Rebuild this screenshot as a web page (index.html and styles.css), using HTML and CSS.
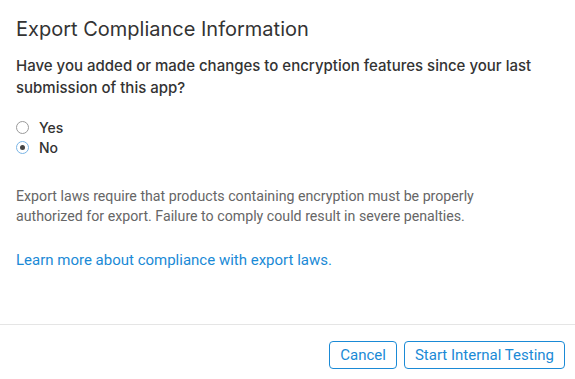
FILE: index.html
```html
<!DOCTYPE html>
<html>
<head>
<meta charset="utf-8">
<link rel="stylesheet" href="styles.css">
</head>
<body>
<div class="dialog">
  <div class="content">
    <h1 class="title">Export Compliance Information</h1>
    <p class="question">Have you added or made changes to encryption features since your last submission of this app?</p>
    <div class="options">
      <label class="option"><span class="radio"></span><span>Yes</span></label>
      <label class="option"><span class="radio checked"></span><span>No</span></label>
    </div>
    <p class="note">Export laws require that products containing encryption must be properly authorized for export. Failure to comply could result in severe penalties.</p>
    <a class="link" href="#">Learn more about compliance with export laws.</a>
  </div>
  <div class="footer">
    <button class="btn">Cancel</button>
    <button class="btn">Start Internal Testing</button>
  </div>
</div>
</body>
</html>
```
FILE: styles.css
```css
html, body {
  margin: 0;
  padding: 0;
  background: #fff;
}
body {
  font-family: Inter, "Liberation Sans", sans-serif;
  color: #333;
  width: 575px;
  height: 379px;
  overflow: hidden;
}
.dialog {
  display: flex;
  flex-direction: column;
  height: 379px;
}
.content {
  padding: 16px 16px 0 16px;
  height: 310px;
  box-sizing: border-box;
}
.title {
  font-size: 20px;
  font-weight: 400;
  margin: 0 0 13px 0;
  line-height: 26px;
  color: #333;
}
.question {
  font-size: 15px;
  font-weight: 500;
  line-height: 22px;
  margin: 0 0 18px 0;
  color: #333;
}
.options {
  display: flex;
  flex-direction: column;
}
.option {
  display: flex;
  align-items: center;
  gap: 10px;
  height: 20px;
  font-size: 14px;
  font-weight: 500;
  color: #333;
}
.radio {
  width: 11px;
  height: 11px;
  border: 1px solid #9a9a9a;
  border-radius: 50%;
  box-sizing: content-box;
  display: flex;
  align-items: center;
  justify-content: center;
}
.radio.checked {
  border-color: #7ab5e6;
}
.radio.checked::after {
  content: "";
  width: 5px;
  height: 5px;
  border-radius: 50%;
  background: #444;
}
.note {
  font-family: Roboto, sans-serif;
  font-size: 14.2px;
  line-height: 20px;
  color: #666;
  max-width: 462px;
  margin: 29px 0 23px 0;
}
.link {
  font-family: Roboto, sans-serif;
  font-size: 15px;
  color: #1a8ad6;
  text-decoration: none;
  line-height: 20px;
}
.footer {
  border-top: 1px solid #e5e5e5;
  margin-top: 14px;
  display: flex;
  justify-content: flex-end;
  gap: 7px;
  padding: 16px 10px 0 0;
}
.btn {
  font-family: Roboto, sans-serif;
  font-size: 15px;
  color: #1a8ad6;
  background: #fff;
  border: 1px solid #1a8ad6;
  border-radius: 4px;
  height: 28px;
  padding: 0 10px;
}
```
